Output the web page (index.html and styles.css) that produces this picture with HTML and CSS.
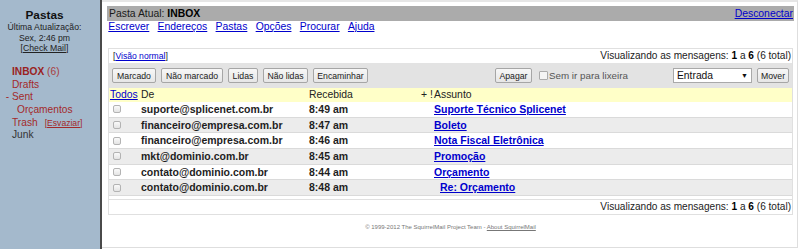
FILE: index.html
```html
<!DOCTYPE html>
<html lang="pt-BR">
<head>
<meta charset="utf-8">
<title>SquirrelMail - INBOX</title>
<link rel="stylesheet" href="styles.css">
</head>
<body>
<div class="app">
  <aside class="left">
    <div class="lhead">
      <div class="ltitle">Pastas</div>
      <div class="lsmall">Última Atualização:</div>
      <div class="lsmall">Sex, 2:46 pm</div>
      <div class="lsmall">[<a href="#">Check Mail</a>]</div>
    </div>
    <ul class="folders">
      <li><b class="inbox">INBOX</b> <span class="cnt">(6)</span></li>
      <li>Drafts</li>
      <li><span class="toggle">- </span>Sent</li>
      <li class="sub">Orçamentos</li>
      <li>Trash<span class="empty">[<a href="#">Esvaziar</a>]</span></li>
      <li class="junk">Junk</li>
    </ul>
  </aside>
  <main class="main">
    <div class="topbar">
      <span>Pasta Atual: <b>INBOX</b></span>
      <a href="#">Desconectar</a>
    </div>
    <nav class="nav">
      <a href="#">Escrever</a>
      <a href="#">Endereços</a>
      <a href="#">Pastas</a>
      <a href="#">Opções</a>
      <a href="#">Procurar</a>
      <a href="#">Ajuda</a>
    </nav>
    <div class="box">
      <div class="vrow">
        <span class="vn">[<a href="#">Visão normal</a>]</span>
        <span class="count">Visualizando as mensagens: <b>1</b> a <b>6</b> (6 total)</span>
      </div>
      <div class="toolbar">
        <div class="tb-left">
          <span class="btn w44">Marcado</span>
          <span class="btn w62">Não marcado</span>
          <span class="btn w30">Lidas</span>
          <span class="btn w45">Não lidas</span>
          <span class="btn w55">Encaminhar</span>
        </div>
        <div class="tb-right">
          <span class="btn w37 apagar">Apagar</span>
          <span class="cbox"></span>
          <span class="lbl">Sem ir para lixeira</span>
          <span class="select"><span>Entrada</span><span class="arrow">▼</span></span>
          <span class="btn w32">Mover</span>
        </div>
      </div>
      <div class="list">
        <div class="lh">
          <span class="c1"><a href="#">Todos</a></span>
          <span>De</span>
          <span>Recebida</span>
          <span>+ !</span>
          <span>Assunto</span>
        </div>
        <div class="row">
          <span class="c1"><span class="cb"></span></span>
          <span>suporte@splicenet.com.br</span>
          <span>8:49 am</span>
          <span></span>
          <span><a href="#">Suporte Técnico Splicenet</a></span>
        </div>
        <div class="row alt">
          <span class="c1"><span class="cb"></span></span>
          <span>financeiro@empresa.com.br</span>
          <span>8:47 am</span>
          <span></span>
          <span><a href="#">Boleto</a></span>
        </div>
        <div class="row">
          <span class="c1"><span class="cb"></span></span>
          <span>financeiro@empresa.com.br</span>
          <span>8:46 am</span>
          <span></span>
          <span><a href="#">Nota Fiscal Eletrônica</a></span>
        </div>
        <div class="row alt">
          <span class="c1"><span class="cb"></span></span>
          <span>mkt@dominio.com.br</span>
          <span>8:45 am</span>
          <span></span>
          <span><a href="#">Promoção</a></span>
        </div>
        <div class="row">
          <span class="c1"><span class="cb"></span></span>
          <span>contato@dominio.com.br</span>
          <span>8:44 am</span>
          <span></span>
          <span><a href="#">Orçamento</a></span>
        </div>
        <div class="row alt">
          <span class="c1"><span class="cb"></span></span>
          <span>contato@dominio.com.br</span>
          <span>8:48 am</span>
          <span></span>
          <span class="re"><a href="#">Re: Orçamento</a></span>
        </div>
      </div>
      <div class="vrow bottom">
        <span></span>
        <span class="count">Visualizando as mensagens: <b>1</b> a <b>6</b> (6 total)</span>
      </div>
    </div>
    <div class="footer">© 1999-2012 The SquirrelMail Project Team - <a href="#">About SquirrelMail</a></div>
  </main>
</div>
</body>
</html>
```

FILE: styles.css
```css
* { box-sizing: border-box; }
html, body { margin: 0; padding: 0; }
body {
  width: 800px;
  height: 249px;
  overflow: hidden;
  background: #fff;
  color: #222;
  font-family: "Liberation Sans", Arial, sans-serif;
}
a { color: #0000cc; text-decoration: underline; }

.app { display: flex; height: 249px; }

/* Left frame */
.left {
  width: 102px;
  flex: none;
  background: #a4b9cc;
  border-right: 2px solid #4a4a4a;
  padding-top: 8px;
}
.lhead { width: 89px; text-align: center; }
.ltitle { font-size: 11.8px; font-weight: bold; line-height: 14px; color: #111; }
.lsmall { font-size: 8.7px; line-height: 10.5px; color: #222; white-space: nowrap; }
.lsmall a { color: #222; }
.folders {
  list-style: none;
  margin: 12.7px 0 0;
  padding: 0 0 0 12px;
  font-size: 10.2px;
  line-height: 12.6px;
}
.folders li { color: #a32a2a; white-space: nowrap; }
.folders .inbox { color: #9a2222; }
.folders .cnt { color: #a84040; }
.folders .toggle { margin-left: -6.3px; }
.folders .sub { padding-left: 5px; }
.folders .empty { font-size: 8.6px; margin-left: 7px; color: #a32a2a; }
.folders .empty a { color: #a32a2a; }
.folders .junk { color: #333; }

/* Right frame */
.main {
  flex: 1;
  display: flex;
  flex-direction: column;
  border-top: 2px solid #e6e6e6;
  border-right: 1px solid #dedede;
  border-bottom: 1px solid #dedede;
  margin: 0 2px 1px 0;
  padding: 4px 3px 0 5px;
}
.topbar {
  height: 15px;
  background: #ababab;
  display: flex;
  justify-content: space-between;
  align-items: center;
  padding: 0 1px 0 2px;
  font-size: 10.4px;
  line-height: 15px;
  color: #1a1a1a;
}
.topbar b { color: #000; }
.nav {
  display: flex;
  gap: 8.3px;
  height: 12px;
  font-size: 10.4px;
  line-height: 12px;
  padding-left: 1.3px;
}

.box {
  margin: 15px 1px 0 1px;
  border: 1px solid #e0e0e0;
}
.vrow {
  display: flex;
  justify-content: space-between;
  height: 14px;
  line-height: 14px;
  padding: 0 1px 0 4px;
}
.vrow .vn { font-size: 8.6px; }
.vrow .count { font-size: 10.1px; color: #222; }
.vrow .count b { color: #000; }
.vrow.bottom { margin-top: 3px; border-top: 1px solid #e0e0e0; height: 15px; }

.toolbar {
  height: 25px;
  background: #e3e3e3;
  display: flex;
  align-items: center;
  justify-content: space-between;
  padding: 0 3px;
}
.tb-left, .tb-right { display: flex; align-items: center; }
.tb-left { gap: 5px; }
.btn {
  display: inline-flex;
  align-items: center;
  justify-content: center;
  height: 15px;
  border: 1px solid #a6a6a6;
  border-radius: 2px;
  background: linear-gradient(#f7f7f7, #e6e6e6);
  font-size: 8.7px;
  color: #1a1a1a;
  white-space: nowrap;
}
.w44 { width: 44px; }
.w62 { width: 62px; }
.w30 { width: 30px; }
.w45 { width: 45px; }
.w55 { width: 55px; }
.w37 { width: 37px; }
.w32 { width: 32px; }
.apagar { margin-right: 7px; }
.cbox {
  width: 9px;
  height: 9px;
  border: 1px solid #ababab;
  border-radius: 1px;
  background: #f4f4f4;
  margin-right: 1px;
}
.lbl {
  width: 83px;
  font-size: 9.8px;
  color: #555;
  white-space: nowrap;
  margin-right: 41px;
}
.select {
  width: 79px;
  height: 15px;
  border: 1px solid #a9a9a9;
  background: #fff;
  display: flex;
  align-items: center;
  justify-content: space-between;
  padding: 0 3px 0 3px;
  font-size: 10.3px;
  color: #111;
  margin-right: 5px;
}
.select .arrow { font-size: 7px; color: #111; }

.lh, .row {
  display: grid;
  grid-template-columns: 32px 168px 112px 13px 1fr;
  white-space: nowrap;
}
.lh {
  height: 14px;
  line-height: 14px;
  background: #ffffc8;
  font-size: 10.4px;
  color: #222;
}
.lh .c1 { padding-left: 1px; }
.row {
  height: 15.7px;
  line-height: 14.7px;
  border-bottom: 1px solid #dadada;
  font-size: 10.5px;
  font-weight: bold;
  color: #1e1e1e;
  background: #fff;
}
.row.alt { background: #ececec; }
.row .c1 { display: flex; align-items: center; padding-left: 4px; }
.cb {
  width: 8px;
  height: 8px;
  border: 1px solid #b3b3b3;
  border-radius: 2px;
  background: linear-gradient(#fafafa, #e4e4e4);
}
.row a { color: #0000cc; }
.row .re { padding-left: 6px; }

.footer {
  margin-top: 8px;
  text-align: center;
  font-size: 6px;
  line-height: 8px;
  color: #777;
}
.footer a { color: #777; }
```
